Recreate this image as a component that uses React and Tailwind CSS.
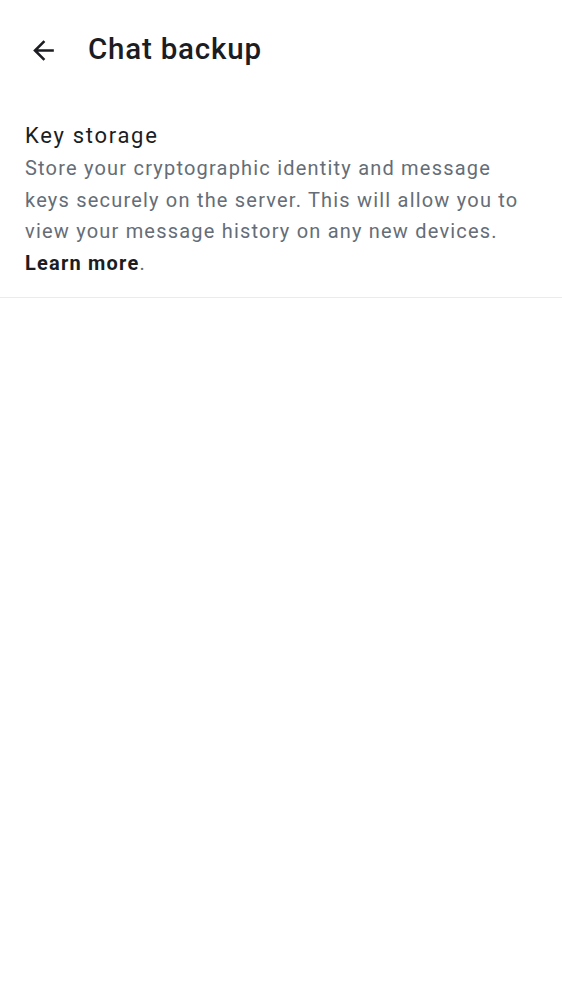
export default function App() {
  return (
    <div className="min-h-screen bg-white" style={{ fontFamily: "Roboto, 'Noto Sans', sans-serif" }}>
      {/* Top bar */}
      <div className="flex items-center h-[100px] px-[24px]">
        <button className="w-[38px] h-[38px] flex items-center justify-center text-[#1b1d22]">
          <svg width="31" height="31" viewBox="0 0 24 24" fill="currentColor">
            <path d="M20 11H7.83l5.59-5.59L12 4l-8 8 8 8 1.41-1.41L7.83 13H20v-2z" />
          </svg>
        </button>
        <h1 className="ml-[26px] text-[29.5px] tracking-[0.8px] text-[#1b1d22] font-medium leading-none">Chat backup</h1>
      </div>

      {/* Key storage */}
      <div className="px-[25px] pt-[21px] pb-[18px] border-b border-[#ebebed]">
        <div className="text-[22px] tracking-[1.7px] leading-[30px] text-[#1b1d22]">Key storage</div>
        <p className="mt-[2px] text-[20px] tracking-[1.2px] leading-[31.6px] text-[#656d77]">
          Store your cryptographic identity and message keys securely on the server. This will allow you to view your
          message history on any new devices. <span className="font-bold text-[#1b1d22]">Learn more</span>.
        </p>
      </div>
    </div>
  );
}
